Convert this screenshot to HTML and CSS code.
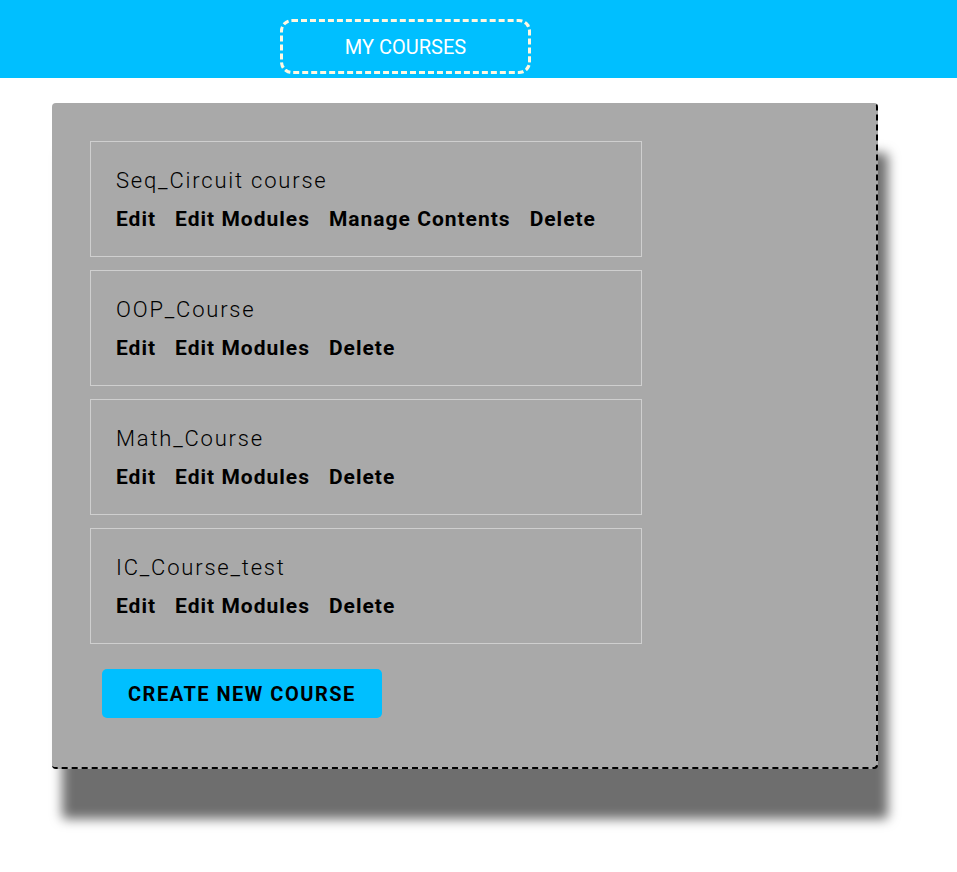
FILE: index.html
```html
<!DOCTYPE html>
<html>
<head>
<meta charset="utf-8">
<link rel="stylesheet" href="styles.css">
</head>
<body>
<header class="topbar">
  <nav class="nav">
    <a class="nav-btn">MY COURSES</a>
  </nav>
</header>
<main class="card">
  <ul class="course-list">
    <li class="course">
      <div class="course-title">Seq_Circuit course</div>
      <div class="course-actions">
        <a>Edit</a><a>Edit Modules</a><a>Manage Contents</a><a>Delete</a>
      </div>
    </li>
    <li class="course">
      <div class="course-title">OOP_Course</div>
      <div class="course-actions">
        <a>Edit</a><a>Edit Modules</a><a>Delete</a>
      </div>
    </li>
    <li class="course">
      <div class="course-title">Math_Course</div>
      <div class="course-actions">
        <a>Edit</a><a>Edit Modules</a><a>Delete</a>
      </div>
    </li>
    <li class="course">
      <div class="course-title">IC_Course_test</div>
      <div class="course-actions">
        <a>Edit</a><a>Edit Modules</a><a>Delete</a>
      </div>
    </li>
  </ul>
  <button class="create-btn">CREATE NEW COURSE</button>
</main>
</body>
</html>
```
FILE: styles.css
```css
* { box-sizing: border-box; }
html, body { margin: 0; padding: 0; background: #fff; }
body { font-family: Roboto, "Liberation Sans", sans-serif; padding-bottom: 90px; }

.topbar {
  background: #00bfff;
  height: 78px;
  padding-top: 19px;
}
.nav {
  display: flex;
  padding-left: 280px;
}
.nav-btn {
  display: flex;
  align-items: center;
  justify-content: center;
  width: 251px;
  height: 55px;
  border: 3px dashed #fff8e1;
  border-radius: 12px;
  color: #fff;
  font-size: 20px;
  font-weight: 400;
}

.card {
  margin: 25px 0 0 52px;
  width: 826px;
  background: #a9a9a9;
  border-right: 2px dashed #000;
  border-bottom: 2px dashed #000;
  border-radius: 4px;
  padding: 38px 0 49px 38px;
  box-shadow: 10px 50px 12px #6e6e6e;
}
.course-list {
  list-style: none;
  margin: 0;
  padding: 0;
  display: flex;
  flex-direction: column;
  gap: 13px;
  width: 552px;
}
.course {
  border: 1px solid #cfcfcf;
  height: 116px;
  padding: 25px 25px 0;
}
.course-title {
  font-size: 22px;
  font-weight: 300;
  letter-spacing: 1.8px;
  color: #000;
  line-height: 28px;
}
.course-actions {
  display: flex;
  gap: 19px;
  margin-top: 13px;
  font-size: 21px;
  font-weight: 700;
  letter-spacing: 1px;
  line-height: 22px;
  color: #000;
}
.create-btn {
  margin: 25px 0 0 12px;
  height: 49px;
  padding: 0 26px;
  border: none;
  border-radius: 5px;
  background: #00bfff;
  color: #000;
  font-family: Roboto, "Liberation Sans", sans-serif;
  font-size: 20px;
  font-weight: 700;
  letter-spacing: 1.5px;
}
```
